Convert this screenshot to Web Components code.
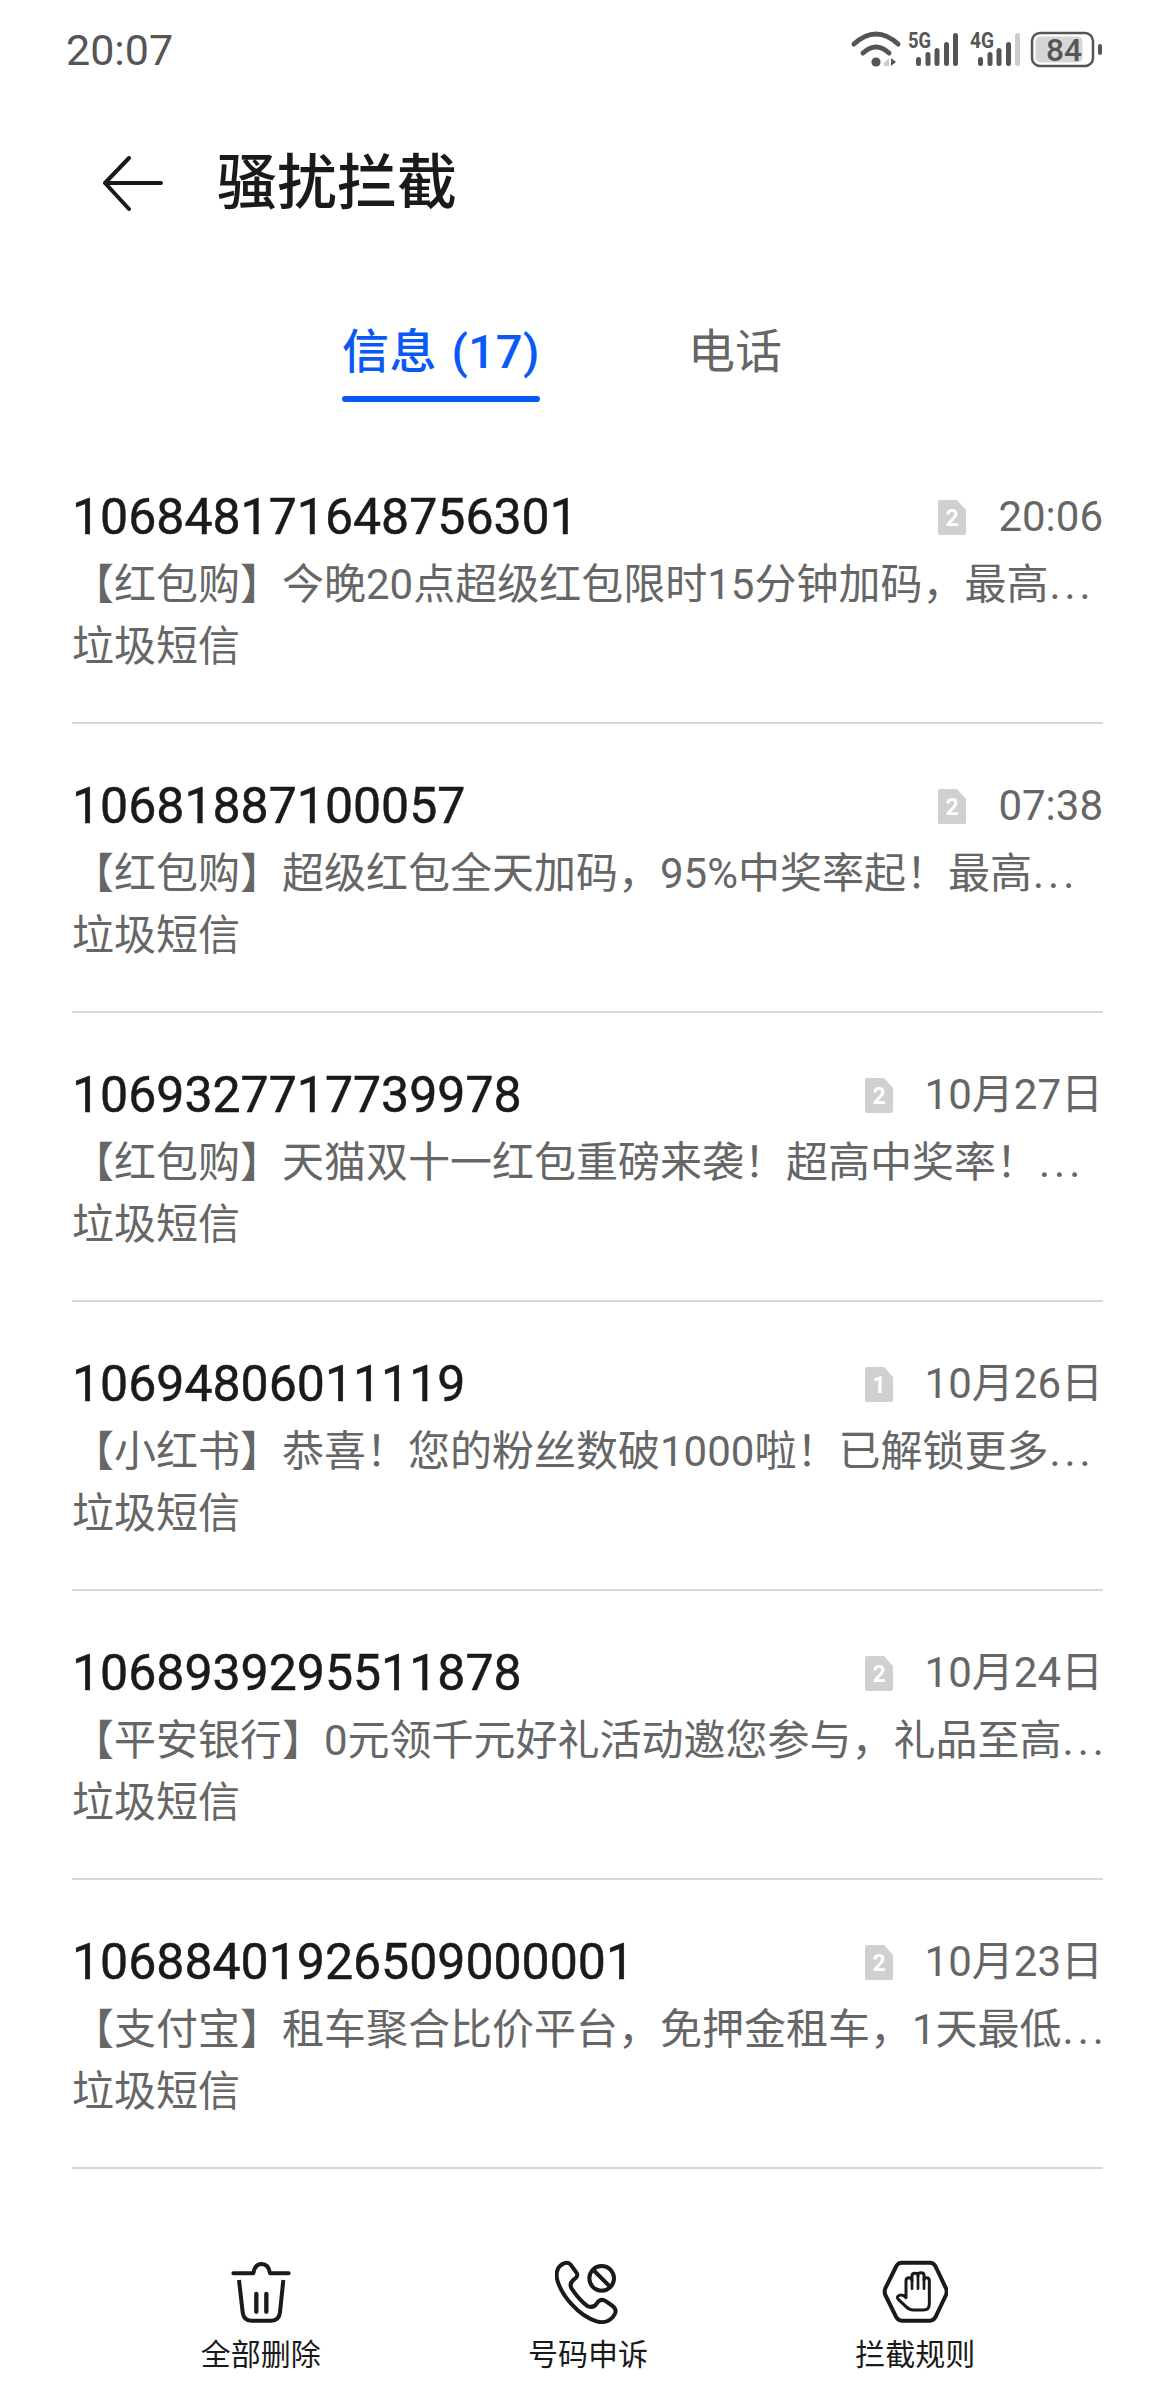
<!DOCTYPE html>
<html lang="zh-CN">
<head>
<meta charset="utf-8">
<title>骚扰拦截</title>
<style>
  html, body { margin: 0; padding: 0; background: #fff; }
  body { font-family: Roboto, "Noto Sans CJK SC", sans-serif; }
</style>
</head>
<body>
<block-page>
  <status-bar slot="status"></status-bar>
  <app-header slot="header" title="骚扰拦截"></app-header>
  <tab-bar slot="tabs"></tab-bar>
  <message-row number="106848171648756301" sim="2" time="20:06" snippet="【红包购】今晚20点超级红包限时15分钟加码，最高"></message-row>
  <message-row number="10681887100057" sim="2" time="07:38" snippet="【红包购】超级红包全天加码，95%中奖率起！最高"></message-row>
  <message-row number="1069327717739978" sim="2" time="10月27日" snippet="【红包购】天猫双十一红包重磅来袭！超高中奖率！"></message-row>
  <message-row number="10694806011119" sim="1" time="10月26日" snippet="【小红书】恭喜！您的粉丝数破1000啦！已解锁更多"></message-row>
  <message-row number="1068939295511878" sim="2" time="10月24日" snippet="【平安银行】0元领千元好礼活动邀您参与，礼品至高"></message-row>
  <message-row number="10688401926509000001" sim="2" time="10月23日" snippet="【支付宝】租车聚合比价平台，免押金租车，1天最低"></message-row>
  <action-bar slot="actions"></action-bar>
</block-page>

<script>
const CJK = 'Roboto, "Noto Sans CJK SC", sans-serif';

class BlockPage extends HTMLElement {
  constructor() {
    super();
    this.attachShadow({ mode: 'open' });
    this.shadowRoot.innerHTML = `
      <style>
        :host { display: flex; flex-direction: column; height: 2400px; overflow: hidden; background: #fff; }
        .list { flex: 1; min-height: 0; overflow: hidden; padding: 0 73px 0 72px; }
      </style>
      <slot name="status"></slot>
      <slot name="header"></slot>
      <slot name="tabs"></slot>
      <div class="list"><slot></slot></div>
      <slot name="actions"></slot>
    `;
  }
}

class StatusBar extends HTMLElement {
  constructor() {
    super();
    this.attachShadow({ mode: 'open' });
    const bars = (xs, tops, lastColor) => xs.map((x, i) =>
      `<rect x="${x}" y="${tops[i]}" width="5" height="${66 - tops[i]}" rx="2.5" fill="${i === 4 && lastColor ? lastColor : '#555'}"/>`).join('');
    this.shadowRoot.innerHTML = `
      <style>
        :host { display: flex; justify-content: space-between; align-items: center; height: 100px; padding: 0 50px 0 66px; color: #555; font: 43px ${CJK}; }
        svg { display: block; }
        .icons { display: flex; }
        text { font-family: Roboto, sans-serif; fill: #555; }
      </style>
      <span>20:07</span>
      <div class="icons">
        <svg width="276" height="100" viewBox="0 0 276 100">
          <g fill="none" stroke="#555" stroke-width="5" stroke-linecap="round">
            <path d="M4 44 Q26 24 48 44"/>
            <path d="M13 53 Q26 41 39 53"/>
          </g>
          <circle cx="26" cy="62" r="4.6" fill="#555"/>
          <path d="M34 63 L39 58 V66 H34Z" fill="#ccc"/>
          <path d="M41 58 L46 62 L41 66Z" fill="#555"/>
          <text x="58" y="48" font-size="22" font-weight="700" textLength="23" lengthAdjust="spacingAndGlyphs">5G</text>
          ${bars([66, 75.5, 84.5, 94, 103], [57, 52, 48, 42, 33])}
          <text x="120" y="48" font-size="22" font-weight="700" textLength="24" lengthAdjust="spacingAndGlyphs">4G</text>
          ${bars([128, 137.5, 146.5, 156, 165], [57, 52, 48, 42, 33], '#ccc')}
          <rect x="182" y="33" width="61" height="33" rx="8" fill="#fff" stroke="#555" stroke-width="2.5"/>
          <rect x="185.5" y="36.5" width="47" height="26" rx="5" fill="#d6d6d6"/>
          <rect x="248" y="44" width="4" height="11" rx="2" fill="#555"/>
          <text x="196" y="61" font-size="32" font-weight="500" textLength="36" lengthAdjust="spacingAndGlyphs">84</text>
        </svg>
      </div>
    `;
  }
}

class AppHeader extends HTMLElement {
  constructor() {
    super();
    this.attachShadow({ mode: 'open' });
    this.shadowRoot.innerHTML = `
      <style>
        :host { display: flex; align-items: center; gap: 54px; height: 164px; padding: 3px 0 0 102px; box-sizing: border-box; }
        svg { display: block; flex: none; }
        h1 { margin: 0; font: 500 60px/1 ${CJK}; color: #1a1a1a; }
      </style>
      <svg width="61" height="56" viewBox="0 0 61 56">
        <path d="M27 2 L3 27 L27 53 M3 27 H59" fill="none" stroke="#1a1a1a" stroke-width="4" stroke-linecap="round" stroke-linejoin="round"/>
      </svg>
      <h1>${this.getAttribute('title')}</h1>
    `;
  }
}

class TabBar extends HTMLElement {
  constructor() {
    super();
    this.attachShadow({ mode: 'open' });
    this.shadowRoot.innerHTML = `
      <style>
        :host { display: grid; grid-template-columns: 294px 294px; justify-content: center; justify-items: center; align-items: start; height: 171px; font: 47px/1 ${CJK}; box-sizing: border-box; padding-top: 64px; }
        .tab { display: flex; flex-direction: column; align-items: stretch; color: #666; }
        .tab.active { color: #0a59f7; font-weight: 500; }
        .tab.active::after { content: ""; height: 6px; margin-top: 21px; border-radius: 3px; background: #0a59f7; }
        .count { letter-spacing: 0.6px; word-spacing: 2px; }
      </style>
      <div class="tab active"><span class="count">信息 (17)</span></div>
      <div class="tab">电话</div>
    `;
  }
}

class MessageRow extends HTMLElement {
  constructor() {
    super();
    this.attachShadow({ mode: 'open' });
    const a = n => this.getAttribute(n);
    this.shadowRoot.innerHTML = `
      <style>
        :host { display: block; height: 289px; box-sizing: border-box; padding-top: 53px; border-bottom: 2px solid #d8d8d8; }
        .top { display: flex; align-items: center; height: 58px; }
        .num { flex: 1; font: 400 50px/58px ${CJK}; color: #1a1a1a; -webkit-text-stroke: 0.5px #1a1a1a; }
        .sim { flex: none; display: block; margin-right: 32px; }
        .sim text { font: 700 23px Roboto, sans-serif; fill: #fff; }
        .time { font: 42px/58px ${CJK}; color: #666; }
        .snippet, .label { font: 42px/62px ${CJK}; color: #666; white-space: nowrap; }
        .snippet { margin-top: 8px; }
        .more { letter-spacing: 4px; margin-left: 1px; }
      </style>
      <div class="top">
        <span class="num">${a('number')}</span>
        <svg class="sim" width="28" height="35" viewBox="0 0 28 35">
          <path d="M2 0 H19 L28 10 V33 Q28 35 26 35 H2 Q0 35 0 33 V2 Q0 0 2 0Z" fill="#d0d0d0"/>
          <text x="14" y="26" text-anchor="middle">${a('sim')}</text>
        </svg>
        <span class="time">${a('time')}</span>
      </div>
      <div class="snippet">${a('snippet')}<span class="more">...</span></div>
      <div class="label">垃圾短信</div>
    `;
  }
}

class ActionItem extends HTMLElement {
  constructor() {
    super();
    this.attachShadow({ mode: 'open' });
    this.shadowRoot.innerHTML = `
      <style>
        :host { display: flex; flex-direction: column; align-items: center; gap: 10px; font: 30px/40px ${CJK}; color: #1a1a1a; }
        ::slotted(svg) { display: block; }
      </style>
      <slot name="icon"></slot>
      <span>${this.getAttribute('label')}</span>
    `;
  }
}

class ActionBar extends HTMLElement {
  constructor() {
    super();
    this.attachShadow({ mode: 'open' });
    this.shadowRoot.innerHTML = `
      <style>
        :host { display: grid; grid-template-columns: repeat(3, 1fr); height: 168px; box-sizing: border-box; padding: 27px 97px 0; background: #fff; }
      </style>
      <action-item label="全部删除">
        <svg slot="icon" style="width:66px;height:66px;display:block;fill:none;stroke:#1a1a1a;stroke-width:12;stroke-linecap:round;stroke-linejoin:round" viewBox="170 85 198 198">
          <path d="M186 128 H246 Q250 100 271 100 Q292 100 296 128 H352"/>
          <path d="M203 148 L214 245 Q217 270 240 270 H300 Q323 270 326 245 L336 148" stroke-linecap="butt"/>
          <path d="M255 190 V243 M285 190 V243" stroke-width="13"/>
        </svg>
      </action-item>
      <action-item label="号码申诉">
        <svg slot="icon" style="width:66px;height:66px;display:block;fill:none;stroke:#1a1a1a;stroke-width:12;stroke-linecap:round;stroke-linejoin:round" viewBox="165 91 198 198">
          <path d="M190 105 C175 112 165 130 172 155 C185 200 235 262 290 278 C315 285 335 275 345 255 C350 245 345 238 338 232 L315 216 C307 212 298 214 292 222 C285 234 275 238 262 232 C245 220 225 195 215 180 C208 168 212 160 222 152 C232 145 235 138 228 130 L212 108 C206 102 198 101 190 105Z"/>
          <circle cx="305" cy="149" r="37"/>
          <path d="M280 124 L330 174" stroke-linecap="butt"/>
        </svg>
      </action-item>
      <action-item label="拦截规则">
        <svg slot="icon" style="width:66px;height:66px;display:block;fill:none;stroke:#1a1a1a;stroke-width:12;stroke-linecap:round;stroke-linejoin:round" viewBox="1146 87 198 198">
          <path d="M1205 98 H1290 Q1300 98 1306 108 L1338 175 Q1342 185 1338 195 L1306 262 Q1300 272 1290 272 H1205 Q1195 272 1189 262 L1156 195 Q1152 185 1156 175 L1189 108 Q1195 98 1205 98Z"/>
          <path d="M1218 203 V152 Q1218 143 1227 143 Q1236 143 1236 152 V138 Q1236 130 1245 130 Q1254 130 1254 138 V135 Q1254 128 1263 128 Q1272 128 1272 136 V150 Q1272 143 1280 143 Q1288 143 1288 152 V222 Q1288 240 1270 240 H1240 Q1228 240 1218 230 L1195 208 Q1188 200 1198 196 Q1208 192 1218 203Z" stroke-width="9"/>
          <path d="M1236 150 V176 M1254 138 V176 M1272 148 V176" stroke-width="8"/>
        </svg>
      </action-item>
    `;
  }
}

customElements.define('block-page', BlockPage);
customElements.define('status-bar', StatusBar);
customElements.define('app-header', AppHeader);
customElements.define('tab-bar', TabBar);
customElements.define('message-row', MessageRow);
customElements.define('action-item', ActionItem);
customElements.define('action-bar', ActionBar);
</script>
</body>
</html>
